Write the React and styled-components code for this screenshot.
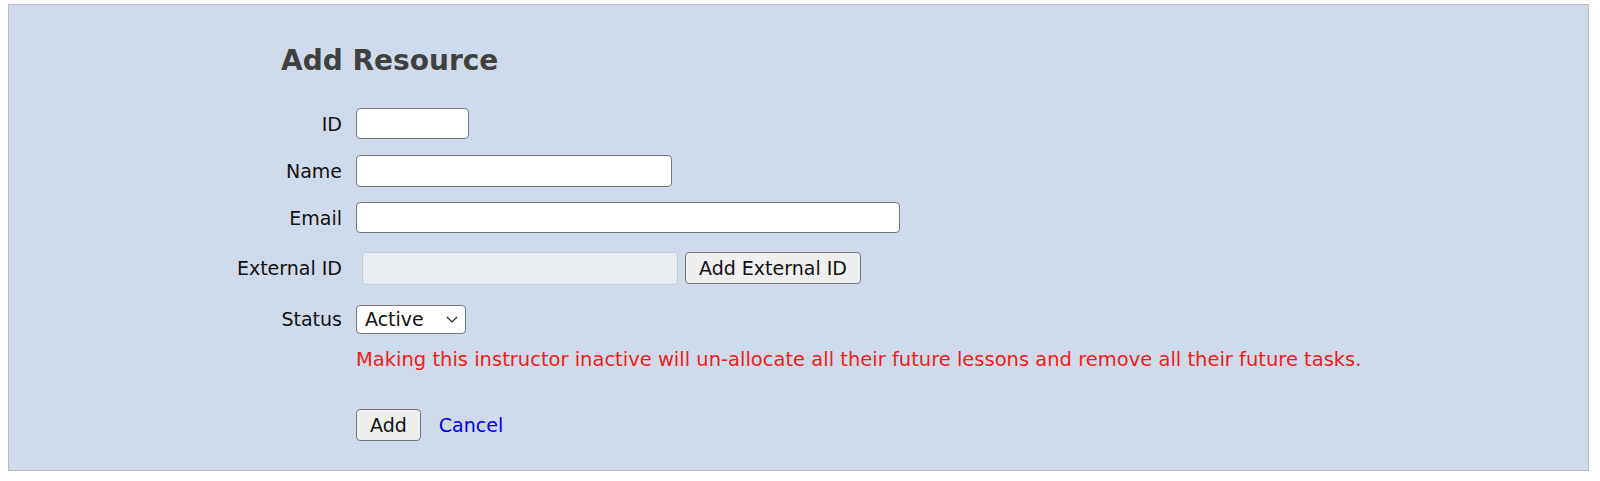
import React from "react";
import styled, { createGlobalStyle } from "styled-components";

const Global = createGlobalStyle`
  html, body { margin: 0; padding: 0; background: #ffffff; }
  body { font-family: "DejaVu Sans", "Liberation Sans", sans-serif; }
  * { box-sizing: border-box; }
`;

const Page = styled.div`
  padding: 4px 11px 10px 8px;
`;

const Panel = styled.section`
  background: #cfdbea;
  border: 1px solid #bcbcbc;
  padding: 39px 0 28px 0;
  height: 467px;
`;

const Title = styled.h1`
  margin: 0 0 22px 272px;
  font-size: 28px;
  line-height: 34px;
  font-weight: bold;
  color: #404040;
  font-family: "DejaVu Sans", sans-serif;
`;

const Form = styled.div`
  display: grid;
  grid-template-columns: 106px auto;
  column-gap: 14px;
  padding-left: 227px;
  font-size: 19px;
  color: #111;
`;

const Label = styled.label`
  grid-column: 1;
  text-align: right;
  display: flex;
  align-items: center;
  justify-content: flex-end;
  height: ${(p) => p.$h}px;
  white-space: nowrap;
`;

const Cell = styled.div`
  grid-column: 2;
  display: flex;
  align-items: center;
  gap: 7px;
  height: ${(p) => p.$h}px;
  margin-top: ${(p) => p.$mt || 0}px;
`;

const TextInput = styled.input`
  width: ${(p) => p.$w}px;
  height: ${(p) => p.$ht || 31}px;
  margin-left: ${(p) => p.$ml || 0}px;
  border: 1px solid #767676;
  border-radius: 4px;
  background: #ffffff;
  font: inherit;
  padding: 0 6px;
  &:disabled {
    background: #e8ebf0;
    border-color: #c4cad3;
  }
`;

const Button = styled.button`
  height: ${(p) => p.$ht || 32}px;
  padding: 0 13px;
  border: 1px solid #767676;
  border-radius: 4px;
  background: #efefef;
  color: #111;
  font-family: "DejaVu Sans", sans-serif;
  font-size: 19px;
`;

const SelectWrap = styled.div`
  position: relative;
  width: 110px;
  height: 29px;
`;

const Select = styled.select`
  appearance: none;
  -webkit-appearance: none;
  width: 100%;
  height: 100%;
  border: 1px solid #767676;
  border-radius: 4px;
  background: #fff;
  font-family: "DejaVu Sans", sans-serif;
  font-size: 19px;
  color: #111;
  padding: 0 0 0 8px;
`;

const Chevron = styled.svg`
  position: absolute;
  right: 8px;
  top: 11px;
  pointer-events: none;
`;

const Warning = styled.div`
  grid-column: 2;
  color: #f21b1b;
  font-size: 19.5px;
  height: 32px;
  display: flex;
  align-items: center;
  white-space: nowrap;
`;

const CancelLink = styled.a`
  color: #0000ee;
  text-decoration: none;
  font-size: 19px;
  margin-left: 11px;
`;

export default function App() {
  return (
    <>
      <Global />
      <Page>
        <Panel>
          <Title>Add Resource</Title>
          <Form>
            <Label $h={47}>ID</Label>
            <Cell $h={47}>
              <TextInput $w={113} $ht={31} />
            </Cell>
            <Label $h={47}>Name</Label>
            <Cell $h={47}>
              <TextInput $w={316} $ht={32} />
            </Cell>
            <Label $h={47}>Email</Label>
            <Cell $h={47}>
              <TextInput $w={544} $ht={31} />
            </Cell>
            <Label $h={54}>External ID</Label>
            <Cell $h={54}>
              <TextInput $w={316} $ht={33} $ml={6} disabled />
              <Button $ht={32}>Add External ID</Button>
            </Cell>
            <Label $h={48}>Status</Label>
            <Cell $h={48}>
              <SelectWrap>
                <Select defaultValue="Active">
                  <option>Active</option>
                  <option>Inactive</option>
                </Select>
                <Chevron width="12" height="7" viewBox="0 0 12 7">
                  <path d="M1 1 L6 6 L11 1" fill="none" stroke="#222" strokeWidth="1.2" />
                </Chevron>
              </SelectWrap>
            </Cell>
            <Warning>
              Making this instructor inactive will un-allocate all their future lessons and remove all their future tasks.
            </Warning>
            <Cell $h={32} $mt={34}>
              <Button $ht={32}>Add</Button>
              <CancelLink href="#">Cancel</CancelLink>
            </Cell>
          </Form>
        </Panel>
      </Page>
    </>
  );
}
